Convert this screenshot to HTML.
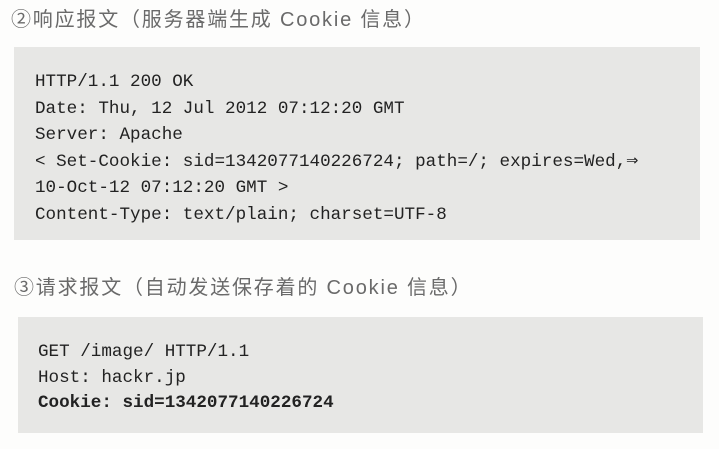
<!DOCTYPE html>
<html><head><meta charset="utf-8"><style>
body{margin:0;width:719px;height:449px;background:#fdfdfc;position:relative;overflow:hidden}
.h{position:absolute;font-family:"Liberation Sans","Noto Sans CJK SC",sans-serif;font-size:20px;color:#6a6a6a;white-space:nowrap;line-height:24px;letter-spacing:1.8px}
.box{position:absolute;background:#e7e7e5}
.c{position:absolute;font-family:"Liberation Mono",monospace;font-size:17.6px;color:#222;white-space:nowrap;line-height:26.5px}
</style></head><body>
<div class="h" style="left:11px;top:8px">②响应报文（服务器端生成 Cookie 信息）</div>
<div class="box" style="left:14px;top:47px;width:686px;height:193px"></div>
<div class="c" style="left:35px;top:69px">HTTP/1.1 200 OK<br>Date: Thu, 12 Jul 2012 07:12:20 GMT<br>Server: Apache<br>&lt; Set-Cookie: sid=1342077140226724; path=/; expires=Wed,<span style="font-size:20px">⇒</span><br>10-Oct-12 07:12:20 GMT &gt;<br>Content-Type: text/plain; charset=UTF-8</div>
<div class="h" style="left:14px;top:276px">③请求报文（自动发送保存着的 Cookie 信息）</div>
<div class="box" style="left:18px;top:317px;width:685px;height:116px"></div>
<div class="c" style="left:38px;top:340px;line-height:25.5px">GET /image/ HTTP/1.1<br>Host: hackr.jp<br><b>Cookie: sid=1342077140226724</b></div>
</body></html>
